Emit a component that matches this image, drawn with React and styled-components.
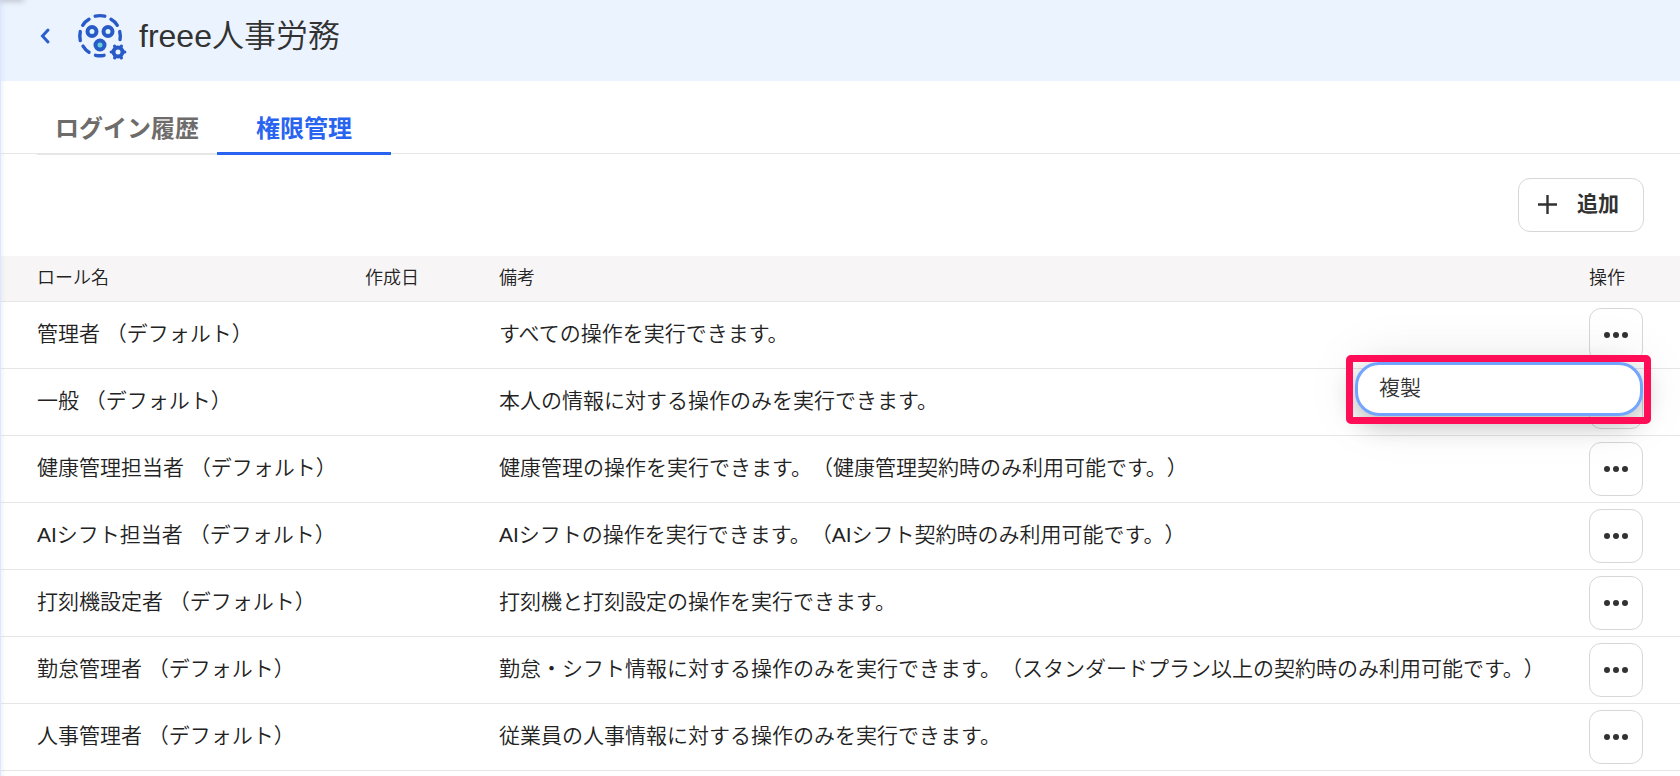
import React, { useState } from "react";
import styled, { createGlobalStyle } from "styled-components";

const GlobalStyle = createGlobalStyle`
  *, *::before, *::after {
    box-sizing: border-box;
  }
  body {
    margin: 0;
    background: #fff;
    color: #222;
    font-family: "Liberation Sans", "Noto Sans CJK JP", sans-serif;
    font-size: 21px;
    font-weight: 350;
    text-spacing-trim: space-all;
    overflow: hidden;
  }
  button {
    font: inherit;
    color: inherit;
    cursor: pointer;
  }
`;

const Page = styled.div`
  position: relative;
  min-height: 100vh;
  border-left: 1px solid #dbe7ff;

  &::before {
    content: "";
    position: absolute;
    top: 0;
    bottom: 0;
    left: 0;
    width: 5px;
    background: linear-gradient(90deg, rgba(60, 90, 160, 0.06), transparent);
  }

  &::after {
    content: "";
    position: absolute;
    top: -4px;
    left: 0;
    width: 22px;
    height: 4px;
    box-shadow: 0 0 6px 1px rgba(0, 0, 0, 0.24);
  }
`;

const Header = styled.header`
  display: flex;
  align-items: center;
  height: 81px;
  padding: 0 36px 10px;
  background: #ebf3ff;
`;

const BackLink = styled.a`
  display: flex;
  width: 40px;
  color: #2c5fce;
`;

const Title = styled.h1`
  margin: 0 0 0 12px;
  color: #323232;
  font-size: 32px;
  font-weight: 350;
  line-height: 48px;
`;

const Tabs = styled.div`
  display: flex;
  height: 74px;
  padding: 0 36px;
  margin-bottom: 23px;
  background: linear-gradient(#e6e6e6, #e6e6e6) 0 72px / 100% 1px no-repeat;
`;

const Tab = styled.button`
  min-width: 174px;
  padding: ${(props) => (props.$active ? "24px" : "22px")} 18px 0;
  border: 0;
  border-bottom: ${(props) =>
    props.$active ? "3px solid #2864f0" : "1px solid #e6e6e6"};
  background: none;
  color: ${(props) => (props.$active ? "#2864f0" : "#6e6b6b")};
  font-size: 24px;
  font-weight: 700;
  line-height: 48px;
`;

const Toolbar = styled.div`
  display: flex;
  justify-content: flex-end;
  padding: 0 36px 24px;
`;

const AddButton = styled.button`
  display: flex;
  align-items: center;
  gap: 20px;
  height: 54px;
  padding: 0 24px 2px 19px;
  border: 1px solid #d7d7d7;
  border-radius: 12px;
  background: #fff;
  color: #323232;
  font-weight: 700;
  line-height: 32px;
`;

const Table = styled.table`
  width: 100%;
  border-collapse: separate;
  border-spacing: 0;
  table-layout: fixed;
`;

const Th = styled.th`
  width: ${(props) => props.$width || "auto"};
  height: 46px;
  padding: 0 0 2px;
  padding-left: ${(props) => (props.$first ? "36px" : "0")};
  border-bottom: 1px solid #e6e6e6;
  background: #f7f5f6;
  font-size: 18px;
  font-weight: 350;
  line-height: 24px;
  text-align: left;
`;

const Td = styled.td`
  height: 67px;
  padding: 0 0 2px;
  padding-left: ${(props) => (props.$first ? "36px" : "0")};
  border-bottom: 1px solid #e6e6e6;
  line-height: 32px;
  white-space: nowrap;
`;

const ActionTd = styled(Td)`
  padding: 0;
`;

const Actions = styled.div`
  position: relative;
  width: 54px;
`;

const MoreButton = styled.button`
  display: flex;
  align-items: center;
  justify-content: center;
  width: 54px;
  height: 54px;
  padding: 0;
  border: 1px solid #d7d7d7;
  border-radius: 12px;
  background: #fff;
`;

const Menu = styled.div`
  position: absolute;
  top: 47px;
  right: -8px;
  z-index: 1;
  width: 305px;
  padding: 7px 8px 8px 9px;

  /* highlight frame, kept above the shadow of the item */
  &::after {
    content: "";
    position: absolute;
    inset: 0;
    border: 7px solid #ff0d57;
    border-radius: 5px;
    pointer-events: none;
  }
`;

const MenuItem = styled.button`
  display: block;
  width: 100%;
  height: 54px;
  padding: 0 21px 2px;
  border: 3px solid #73a5ff;
  border-radius: 24px;
  background: #fff;
  box-shadow: 0 8px 24px rgba(0, 0, 0, 0.24), 0 0 56px rgba(0, 0, 0, 0.1);
  color: #323232;
  line-height: 32px;
  text-align: left;
`;

const roles = [
  { name: "管理者", note: "すべての操作を実行できます。" },
  { name: "一般", note: "本人の情報に対する操作のみを実行できます。" },
  {
    name: "健康管理担当者",
    note: "健康管理の操作を実行できます。（健康管理契約時のみ利用可能です。）",
  },
  {
    name: "AIシフト担当者",
    note: "AIシフトの操作を実行できます。（AIシフト契約時のみ利用可能です。）",
  },
  { name: "打刻機設定者", note: "打刻機と打刻設定の操作を実行できます。" },
  {
    name: "勤怠管理者",
    note: "勤怠・シフト情報に対する操作のみを実行できます。（スタンダードプラン以上の契約時のみ利用可能です。）",
  },
  { name: "人事管理者", note: "従業員の人事情報に対する操作のみを実行できます。" },
];

const tabs = ["ログイン履歴", "権限管理"];

function ChevronIcon() {
  return (
    <svg width="16" height="20" viewBox="0 0 16 20" aria-hidden="true">
      <path
        d="M11 4 5.500 10 11 16"
        fill="none"
        stroke="currentColor"
        strokeWidth="3"
        strokeLinecap="round"
      />
    </svg>
  );
}

function RolesIcon() {
  const teeth = [0, 60, 120, 180, 240, 300];
  return (
    <svg width="50" height="50" viewBox="0 0 50 50" aria-hidden="true">
      <g fill="none" stroke="#285ac8" strokeLinecap="round">
        {/* seven dashes, the lower right one gives way to the gear */}
        <path
          d="M18.200 5.200q4.800-1.200 9.600 0M34 8.300q4 2.200 6.300 6M42.700 20.600q1 4 .3 8M12 8.300q-4 2.200-6.300 6M3.300 20.600q-1 4.500 0 9M6 35.100q2.500 4 6 6.200M18.500 44.300q4.500 1 8.500 0"
          strokeWidth="3.400"
        />
        <g strokeWidth="4">
          <circle cx="15" cy="20.500" r="4.500" fill="#dcf5f8" />
          <circle cx="31" cy="20.500" r="4.500" fill="#dcf5f8" />
          <circle cx="23" cy="34" r="4.500" fill="#64d2d7" />
        </g>
        <g transform="translate(41 41)" strokeWidth="3.200">
          <circle r="4.500" strokeWidth="4" />
          {teeth.map((angle) => (
            <path key={angle} d="M6 0h.8" transform={`rotate(${angle})`} />
          ))}
        </g>
      </g>
    </svg>
  );
}

function PlusIcon() {
  return (
    <svg width="19" height="19" viewBox="0 0 19 19" aria-hidden="true">
      <path d="M9.500 0v19M0 9.500h19" stroke="#323232" strokeWidth="2.400" />
    </svg>
  );
}

function DotsIcon() {
  return (
    <svg width="24" height="6" viewBox="0 0 24 6" fill="#323232" aria-hidden="true">
      <circle cx="3" cy="3" r="3" />
      <circle cx="12" cy="3" r="3" />
      <circle cx="21" cy="3" r="3" />
    </svg>
  );
}

function RoleRow(props) {
  const { role, open, onToggle } = props;

  return (
    <tr>
      <Td $first>{role.name} （デフォルト）</Td>
      <Td />
      <Td>{role.note}</Td>
      <ActionTd>
        <Actions>
          <MoreButton
            type="button"
            aria-label={`${role.name}の操作`}
            aria-expanded={open}
            onClick={onToggle}
          >
            <DotsIcon />
          </MoreButton>
          {open && (
            <Menu>
              <MenuItem type="button">複製</MenuItem>
            </Menu>
          )}
        </Actions>
      </ActionTd>
    </tr>
  );
}

export default function App() {
  const [activeTab, setActiveTab] = useState(1);
  const [openRow, setOpenRow] = useState(0);

  return (
    <Page>
      <GlobalStyle />
      <Header>
        <BackLink href="#" aria-label="戻る">
          <ChevronIcon />
        </BackLink>
        <RolesIcon />
        <Title>freee人事労務</Title>
      </Header>
      <Tabs role="tablist">
        {tabs.map((label, index) => (
          <Tab
            key={label}
            type="button"
            role="tab"
            aria-selected={index === activeTab}
            $active={index === activeTab}
            onClick={() => setActiveTab(index)}
          >
            {label}
          </Tab>
        ))}
      </Tabs>
      <Toolbar>
        <AddButton type="button">
          <PlusIcon />
          追加
        </AddButton>
      </Toolbar>
      <Table>
        <thead>
          <tr>
            <Th $first $width="364px">
              ロール名
            </Th>
            <Th $width="134px">作成日</Th>
            <Th>備考</Th>
            <Th $width="91px">操作</Th>
          </tr>
        </thead>
        <tbody>
          {roles.map((role, index) => (
            <RoleRow
              key={role.name}
              role={role}
              open={index === openRow}
              onToggle={() => setOpenRow(index === openRow ? -1 : index)}
            />
          ))}
        </tbody>
      </Table>
    </Page>
  );
}
